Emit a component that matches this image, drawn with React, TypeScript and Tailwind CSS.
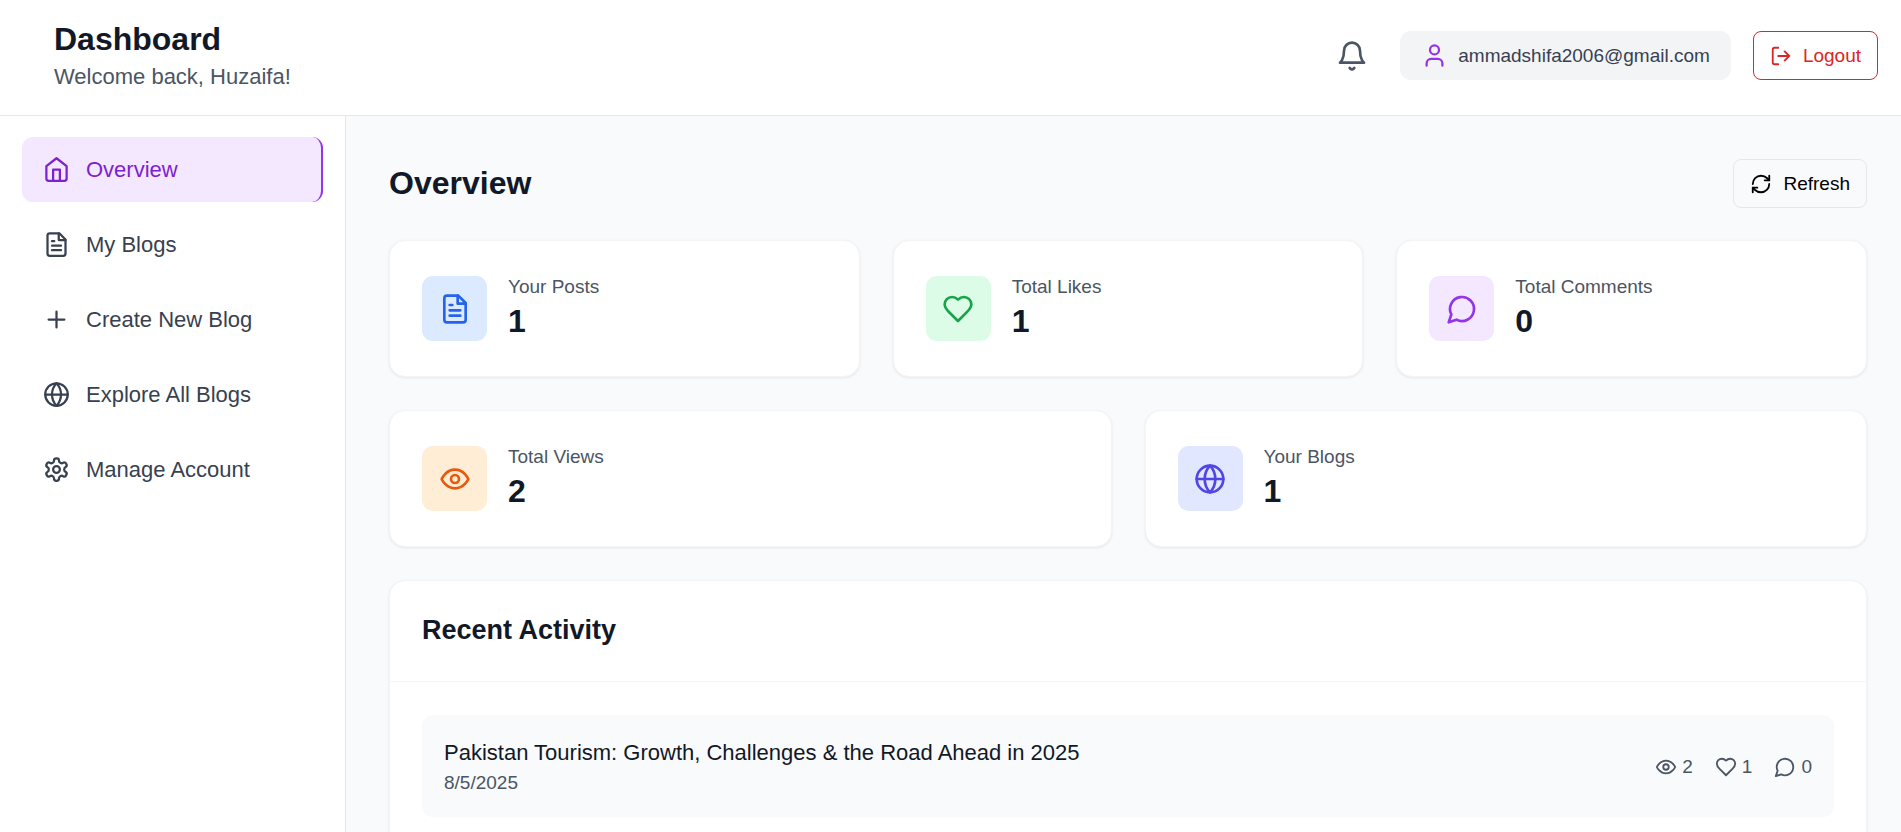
import type { ReactNode } from "react";

type IconProps = { className?: string };

function Icon({ className, children }: IconProps & { children: ReactNode }) {
  return (
    <svg
      viewBox="0 0 24 24"
      fill="none"
      stroke="currentColor"
      strokeWidth={2}
      strokeLinecap="round"
      strokeLinejoin="round"
      aria-hidden="true"
      className={`shrink-0 ${className ?? ""}`}
    >
      {children}
    </svg>
  );
}

const HomeIcon = (p: IconProps) => (
  <Icon {...p}>
    <path d="m3 9 9-7 9 7v11a2 2 0 0 1-2 2H5a2 2 0 0 1-2-2z" />
    <polyline points="9 22 9 12 15 12 15 22" />
  </Icon>
);
const FileIcon = (p: IconProps) => (
  <Icon {...p}>
    <path d="M14.5 2H6a2 2 0 0 0-2 2v16a2 2 0 0 0 2 2h12a2 2 0 0 0 2-2V7.5L14.5 2z" />
    <polyline points="14 2 14 8 20 8" />
    <path d="M16 13H8M16 17H8M10 9H8" />
  </Icon>
);
const PlusIcon = (p: IconProps) => (
  <Icon {...p}>
    <path d="M5 12h14M12 5v14" />
  </Icon>
);
const GlobeIcon = (p: IconProps) => (
  <Icon {...p}>
    <circle cx="12" cy="12" r="10" />
    <path d="M12 2a14.5 14.5 0 0 0 0 20 14.5 14.5 0 0 0 0-20M2 12h20" />
  </Icon>
);
const SettingsIcon = (p: IconProps) => (
  <Icon {...p}>
    <path d="M12.22 2h-.44a2 2 0 0 0-2 2v.18a2 2 0 0 1-1 1.73l-.43.25a2 2 0 0 1-2 0l-.15-.08a2 2 0 0 0-2.73.73l-.22.38a2 2 0 0 0 .73 2.73l.15.1a2 2 0 0 1 1 1.72v.51a2 2 0 0 1-1 1.74l-.15.09a2 2 0 0 0-.73 2.73l.22.38a2 2 0 0 0 2.73.73l.15-.08a2 2 0 0 1 2 0l.43.25a2 2 0 0 1 1 1.73V20a2 2 0 0 0 2 2h.44a2 2 0 0 0 2-2v-.18a2 2 0 0 1 1-1.73l.43-.25a2 2 0 0 1 2 0l.15.08a2 2 0 0 0 2.73-.73l.22-.39a2 2 0 0 0-.73-2.73l-.15-.08a2 2 0 0 1-1-1.74v-.5a2 2 0 0 1 1-1.74l.15-.09a2 2 0 0 0 .73-2.73l-.22-.38a2 2 0 0 0-2.73-.73l-.15.08a2 2 0 0 1-2 0l-.43-.25a2 2 0 0 1-1-1.73V4a2 2 0 0 0-2-2z" />
    <circle cx="12" cy="12" r="3" />
  </Icon>
);
const BellIcon = (p: IconProps) => (
  <Icon {...p}>
    <path d="M6 8a6 6 0 0 1 12 0c0 7 3 9 3 9H3s3-2 3-9" />
    <path d="M10.3 21a1.94 1.94 0 0 0 3.4 0" />
  </Icon>
);
const UserIcon = (p: IconProps) => (
  <Icon {...p}>
    <path d="M19 21v-2a4 4 0 0 0-4-4H9a4 4 0 0 0-4 4v2" />
    <circle cx="12" cy="7" r="4" />
  </Icon>
);
const LogoutIcon = (p: IconProps) => (
  <Icon {...p}>
    <path d="M9 21H5a2 2 0 0 1-2-2V5a2 2 0 0 1 2-2h4" />
    <path d="m16 17 5-5-5-5M21 12H9" />
  </Icon>
);
const RefreshIcon = (p: IconProps) => (
  <Icon {...p}>
    <path d="M3 12a9 9 0 0 1 9-9 9.75 9.75 0 0 1 6.74 2.74L21 8" />
    <path d="M21 3v5h-5" />
    <path d="M21 12a9 9 0 0 1-9 9 9.75 9.75 0 0 1-6.74-2.74L3 16" />
    <path d="M8 16H3v5" />
  </Icon>
);
const HeartIcon = (p: IconProps) => (
  <Icon {...p}>
    <path d="M19 14c1.49-1.46 3-3.21 3-5.5A5.5 5.5 0 0 0 16.5 3c-1.76 0-3 .5-4.5 2-1.5-1.5-2.74-2-4.5-2A5.5 5.5 0 0 0 2 8.5c0 2.3 1.5 4.05 3 5.5l7 7Z" />
  </Icon>
);
const CommentIcon = (p: IconProps) => (
  <Icon {...p}>
    <path d="M7.9 20A9 9 0 1 0 4 16.1L2 22Z" />
  </Icon>
);
const EyeIcon = (p: IconProps) => (
  <Icon {...p}>
    <path d="M2 12s3-7 10-7 10 7 10 7-3 7-10 7-10-7-10-7Z" />
    <circle cx="12" cy="12" r="3" />
  </Icon>
);

const navItems = [
  { label: "Overview", icon: HomeIcon, active: true },
  { label: "My Blogs", icon: FileIcon, active: false },
  { label: "Create New Blog", icon: PlusIcon, active: false },
  { label: "Explore All Blogs", icon: GlobeIcon, active: false },
  { label: "Manage Account", icon: SettingsIcon, active: false },
];

const topStats = [
  { label: "Your Posts", value: 1, icon: FileIcon, tone: "bg-[#dbeafe] text-[#2563eb]" },
  { label: "Total Likes", value: 1, icon: HeartIcon, tone: "bg-[#dcfce7] text-[#16a34a]" },
  { label: "Total Comments", value: 0, icon: CommentIcon, tone: "bg-[#f3e8ff] text-[#9333ea]" },
];

const bottomStats = [
  { label: "Total Views", value: 2, icon: EyeIcon, tone: "bg-[#ffedd5] text-[#ea580c]" },
  { label: "Your Blogs", value: 1, icon: GlobeIcon, tone: "bg-[#e0e7ff] text-[#4f46e5]" },
];

const activity = [
  {
    title: "Pakistan Tourism: Growth, Challenges & the Road Ahead in 2025",
    date: "8/5/2025",
    counts: [
      { name: "views", value: 2, icon: EyeIcon },
      { name: "likes", value: 1, icon: HeartIcon },
      { name: "comments", value: 0, icon: CommentIcon },
    ],
  },
];

function StatCard({ label, value, icon: StatIcon, tone }: (typeof topStats)[number]) {
  return (
    <div className="flex items-center gap-[21px] rounded-2xl border border-[#f3f4f6] bg-white p-8 shadow-[0_1px_3px_rgba(0,0,0,0.08)]">
      <div className={`flex size-[65px] shrink-0 items-center justify-center rounded-[11px] ${tone}`}>
        <StatIcon className="size-8" />
      </div>
      <div className="pb-[1px]">
        <p className="text-[19px] leading-[27px] text-[#4b5563]">{label}</p>
        <p className="text-[32px] leading-[43px] font-bold text-[#111827]">{value}</p>
      </div>
    </div>
  );
}

export default function App() {
  return (
    <div className="flex h-screen flex-col overflow-hidden bg-[#f9fafb] font-['Liberation_Sans',Arial,sans-serif] text-[22px] leading-8 text-[#111827]">
      <header className="flex shrink-0 items-center justify-between border-b border-[#e5e7eb] bg-white pt-[18px] pr-[23px] pb-[22px] pl-[54px]">
        <div>
          <h1 className="text-[32px] leading-[43px] font-bold">Dashboard</h1>
          <p className="text-[#4b5563]">Welcome back, Huzaifa!</p>
        </div>
        <div className="flex items-center gap-[22px] text-[19px] leading-[27px]">
          <button type="button" aria-label="Notifications" className="p-[10px] text-[#4b5563]">
            <BellIcon className="size-8" />
          </button>
          <div className="flex items-center gap-[10px] rounded-[11px] bg-[#f3f4f6] px-[21px] py-[11px]">
            <UserIcon className="size-[27px] text-[#9333ea]" />
            <span className="text-[#374151]">ammadshifa2006@gmail.com</span>
          </div>
          <button
            type="button"
            className="flex items-center gap-[11px] rounded-lg border border-[#dc2626] bg-white px-4 py-[10px] text-[#dc2626]"
          >
            <LogoutIcon className="size-[22px]" />
            Logout
          </button>
        </div>
      </header>

      <div className="flex min-h-0 flex-1">
        <aside className="w-[346px] shrink-0 border-r border-[#e5e7eb] bg-white px-[22px] py-[21px]">
          <nav className="flex flex-col gap-[10px]">
            {navItems.map(({ label, icon: NavIcon, active }) => (
              <a
                key={label}
                href="#"
                aria-current={active ? "page" : undefined}
                className={
                  active
                    ? "flex h-[65px] items-center gap-4 rounded-[11px] border-r-2 border-[#9333ea] bg-[#f3e8ff] px-[21px] text-[#7e22ce]"
                    : "flex h-[65px] items-center gap-4 rounded-[11px] px-[21px] text-[#374151]"
                }
              >
                <NavIcon className="size-[27px]" />
                {label}
              </a>
            ))}
          </nav>
        </aside>

        <main className="min-w-0 flex-1 overflow-hidden pt-[43px] pr-[34px] pl-[43px]">
          <div className="mb-8 flex items-center justify-between">
            <h2 className="text-[32px] leading-[43px] font-bold">Overview</h2>
            <button
              type="button"
              className="flex items-center gap-[11px] rounded-lg border border-[#e5e7eb] px-4 py-[10px] text-[19px] leading-[27px] text-black"
            >
              <RefreshIcon className="size-[22px]" />
              Refresh
            </button>
          </div>

          <div className="flex flex-col gap-[33px]">
            <div className="grid grid-cols-3 gap-[33px]">
              {topStats.map((s) => (
                <StatCard key={s.label} {...s} />
              ))}
            </div>
            <div className="grid grid-cols-2 gap-[33px]">
              {bottomStats.map((s) => (
                <StatCard key={s.label} {...s} />
              ))}
            </div>

            <section className="rounded-2xl border border-[#f3f4f6] bg-white shadow-[0_1px_3px_rgba(0,0,0,0.08)]">
              <div className="border-b border-[#f3f4f6] px-8 pt-[31px] pb-[33px]">
                <h3 className="text-[27px] leading-9 font-bold">Recent Activity</h3>
              </div>
              <ul className="flex flex-col gap-[22px] px-8 py-[33px]">
                {activity.map((item) => (
                  <li
                    key={item.title}
                    className="flex items-center justify-between rounded-[11px] bg-[#f9fafb] px-[22px] pt-[22px] pb-[21px]"
                  >
                    <div>
                      <h4>{item.title}</h4>
                      <p className="text-[19px] leading-[27px] text-[#4b5563]">{item.date}</p>
                    </div>
                    <div className="flex items-center gap-[22px] text-[19px] leading-[27px] text-[#4b5563]">
                      {item.counts.map(({ name, value, icon: CountIcon }) => (
                        <span key={name} className="flex items-center gap-[5px]">
                          <CountIcon className="size-[22px]" />
                          {value}
                        </span>
                      ))}
                    </div>
                  </li>
                ))}
              </ul>
            </section>
          </div>
        </main>
      </div>
    </div>
  );
}
